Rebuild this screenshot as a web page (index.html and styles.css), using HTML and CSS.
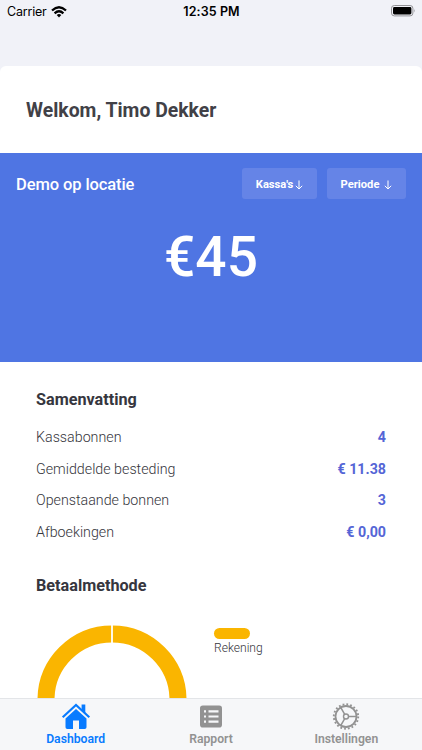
FILE: index.html
```html
<!DOCTYPE html>
<html lang="nl">
<head>
<meta charset="utf-8">
<title>Dashboard</title>
<link rel="stylesheet" href="styles.css">
</head>
<body>
<div class="screen">
  <header class="status">
    <div class="carrier"><span>Carrier</span>
      <svg class="wifi" width="16" height="12" viewBox="0 0 16 12"><g fill="none" stroke="#000" stroke-width="2.3"><path d="M1 4.5Q8-2 15 4.5"/><path d="M3.6 7.3Q8 3.3 12.4 7.3"/></g><path d="M5.7 9Q8 7.2 10.3 9L8 11.4Z"/></svg>
    </div>
    <div class="clock">12:35 PM</div>
    <svg class="battery" width="25" height="12" viewBox="0 0 25 12"><rect x=".5" y=".5" width="21.4" height="10.4" rx="2.8" fill="none" stroke="#929296"/><rect x="2" y="2" width="18.4" height="7.4" rx="1.4"/><path d="M23.2 4Q24.6 5.7 23.2 7.4Z" fill="#929296"/></svg>
  </header>
  <main class="card">
    <h1 class="welcome">Welkom, Timo Dekker</h1>
    <section class="hero">
      <div class="toolbar">
        <h2 class="location">Demo op locatie</h2>
        <button class="filter kassa"><span>Kassa's</span><svg width="8" height="10" viewBox="0 0 8 10"><path d="M4 .5V9M.8 5.8L4 9L7.2 5.8"/></svg></button>
        <button class="filter period"><span>Periode</span><svg width="8" height="10" viewBox="0 0 8 10"><path d="M4 .5V9M.8 5.8L4 9L7.2 5.8"/></svg></button>
      </div>
      <div class="total">€45</div>
    </section>
    <section class="details">
      <h3 class="title">Samenvatting</h3>
      <dl class="summary">
        <div class="row"><dt>Kassabonnen</dt><dd>4</dd></div>
        <div class="row"><dt>Gemiddelde besteding</dt><dd>€ 11.38</dd></div>
        <div class="row"><dt>Openstaande bonnen</dt><dd>3</dd></div>
        <div class="row"><dt>Afboekingen</dt><dd>€ 0,00</dd></div>
      </dl>
      <h3 class="title method-title">Betaalmethode</h3>
      <div class="chart">
        <svg width="150" height="150" viewBox="0 0 150 150"><circle cx="75" cy="75" r="66" fill="none" stroke="#fab500" stroke-width="17"/><path d="M75 0V18" stroke="#fff" stroke-width="1.8"/></svg>
        <div class="legend"><i class="swatch"></i><span>Rekening</span></div>
      </div>
    </section>
  </main>
  <nav class="tabs">
    <a class="tab active"><svg width="30" height="28" viewBox="0 0 30 28"><path d="M1.7 15.2L15 3L28.3 15.2" fill="none" stroke="currentColor" stroke-width="2.2"/><path d="M20.6 2.5h3.7v8.5L20.6 7.6zM15 7L25.5 16.5V25.2Q25.5 27 23.7 27H18V18.5H12V27H6.3Q4.5 27 4.5 25.2V16.5Z" fill="currentColor"/></svg><span>Dashboard</span></a>
    <a class="tab"><svg width="30" height="28" viewBox="0 0 30 28"><rect x="4" y="3.5" width="22" height="22" rx="2.8" fill="currentColor"/><path d="M8 9.3h2M8 14.5h2M8 19.7h2M12.5 9.3h10M12.5 14.5h10M12.5 19.7h10" stroke="#f6f7f9" stroke-width="2.2" fill="none"/></svg><span>Rapport</span></a>
    <a class="tab"><svg width="30" height="28" viewBox="0 0 30 28"><g fill="none" stroke="currentColor"><circle cx="15" cy="14.5" r="10.5" stroke-width="1.8"/><circle cx="15" cy="14.5" r="12.2" stroke-width="1.9" stroke-dasharray="1.8 2.033"/><circle cx="15" cy="14.5" r="2.5" stroke-width="1.4"/><path d="M17.5 14.5H25.5M13.7 12.3L9.7 5.3M13.7 16.7L9.7 23.7" stroke-width="1.5"/></g></svg><span>Instellingen</span></a>
  </nav>
</div>
</body>
</html>
```
FILE: styles.css
```css
* { box-sizing: border-box; }
body { margin: 0; font-family: Roboto, sans-serif; background: #f1f2f8; }
h1, h2, h3, dl, dd { margin: 0; }
.screen { width: 422px; height: 750px; overflow: hidden; display: flex; flex-direction: column; }
.status { height: 66px; flex: none; display: grid; grid-template-columns: 1fr auto 1fr; align-items: start; padding: 4px 6px 0 7px; font: 12.5px/15px Inter, sans-serif; color: #000; }
.carrier { display: flex; align-items: center; gap: 4px; }
.carrier span { letter-spacing: -.2px; }
.clock { font-weight: 600; letter-spacing: .1px; }
.battery { justify-self: end; margin-top: 1px; }
.card { flex: 1; min-height: 0; overflow: hidden; background: #fff; border-radius: 6px 6px 0 0; }
.welcome { height: 87px; padding-left: 26px; font-size: 19.4px; line-height: 90px; font-weight: 700; color: #414147; }
.hero { height: 209px; background: #4f75e3; color: #fff; padding: 15px 16px 0; }
.toolbar { display: flex; align-items: center; }
.location { flex: 1; padding-top: 2px; font-size: 16.5px; line-height: 20px; font-weight: 500; letter-spacing: -.1px; }
.filter { height: 31px; border: 0; border-radius: 3px; background: #6584e7; color: #fff; font: bold 11.2px/14px Roboto, sans-serif; display: flex; align-items: center; justify-content: center; padding: 2px 0 0; }
.filter svg { fill: none; stroke: #fff; stroke-width: 1; }
.kassa { width: 75px; gap: 2px; margin-right: 10px; }
.period { width: 79px; gap: 5px; }
.total { margin-top: 25px; text-align: center; font-size: 55px; line-height: 66px; font-weight: 500; }
.details { padding: 28px 36px 0; }
.title { font-size: 16.2px; line-height: 20px; font-weight: 700; color: #36363e; }
.summary { margin-top: 12px; }
.row { display: flex; justify-content: space-between; height: 31.6px; line-height: 31.8px; font-size: 14.25px; }
.row dt { font-weight: 300; color: #35353b; }
.row dd { font-weight: 700; color: #5465d6; }
.method-title { margin-top: 28px; }
.chart { display: flex; margin: 29px 0 0 1.3px; }
.legend { margin: 3px 0 0 26.7px; font-size: 12.1px; line-height: 15px; font-weight: 300; color: #35353b; }
.swatch { display: block; width: 36px; height: 11px; border-radius: 6px; background: #fab500; margin-bottom: 2px; }
.tabs { height: 52px; flex: none; background: #f6f7f9; border-top: 1px solid #e3e5e8; padding: 3px 8px 0; display: grid; grid-template-columns: repeat(3, 1fr); }
.tab { display: flex; flex-direction: column; align-items: center; color: #929292; font-size: 12.2px; line-height: 15px; font-weight: 600; }
.tab span { margin-top: 2px; }
.active { color: #087bff; }
```
